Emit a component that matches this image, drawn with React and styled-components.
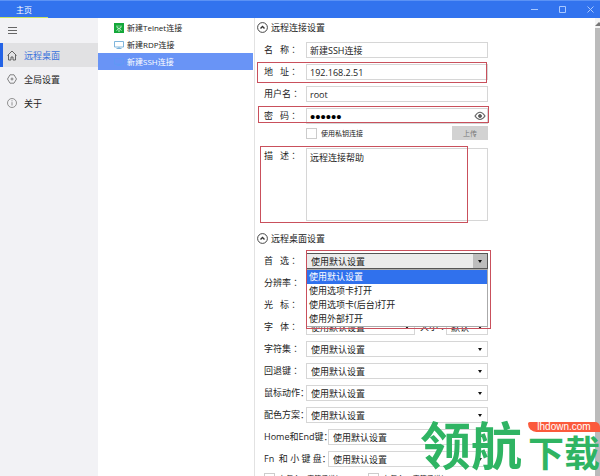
import React from "react";
import styled, { createGlobalStyle } from "styled-components";

const GlobalStyle = createGlobalStyle`
  * {
    box-sizing: border-box;
  }

  body {
    margin: 0;
    overflow: hidden;
  }

  body,
  button,
  input,
  select,
  textarea {
    font-family: "Open Sans", "Noto Sans CJK SC", sans-serif;
    font-size: 9px;
    color: #222;
  }
`;

const Window = styled.div`
  position: relative;
  height: 100vh;
  display: flex;
  flex-direction: column;
  overflow: hidden;
  background: #fff;
`;

const TitleBar = styled.header`
  flex: none;
  height: 18px;
  display: flex;
  justify-content: space-between;
  background: #3273ee;
  border-top: 1px solid #5b92f5;
`;

const HomeTab = styled.button`
  width: 48px;
  padding: 0;
  border: 0;
  border-bottom: 1px solid #c9e265;
  background: none;
  color: #fff;
  font-size: 8px;
`;

const WindowButtons = styled.div`
  display: flex;
  gap: 8px;
`;

const WindowButton = styled.button`
  width: 20px;
  padding: 0;
  border: 0;
  background: none;

  svg {
    display: block;
    margin: 0 auto;
  }
`;

const Body = styled.div`
  flex: 1;
  min-height: 0;
  display: flex;
`;

const Sidebar = styled.nav`
  flex: none;
  width: 98px;
  display: flex;
  flex-direction: column;
  background: #f2f2f5;
`;

const MenuButton = styled.button`
  height: 25px;
  padding: 0 8px;
  border: 0;
  background: none;
  text-align: left;

  svg {
    display: block;
  }
`;

const NavLink = styled.a`
  height: 24px;
  display: flex;
  align-items: center;
  gap: 7px;
  padding-left: 4px;
  border-left: 3px solid ${(props) => (props.$active ? "#2463e6" : "transparent")};
  background: ${(props) => (props.$active ? "#e1e1e3" : "none")};
  color: ${(props) => (props.$active ? "#3a72dc" : "#222")};
  text-decoration: none;
`;

const Connections = styled.div`
  flex: none;
  width: 157px;
  padding: 1px 1px 0 0;
  border-right: 1px solid #e2e2e2;
`;

const Connection = styled.a`
  height: 17px;
  display: flex;
  align-items: center;
  gap: 3px;
  padding-left: 16px;
  background: ${(props) => (props.$active ? "#6994f6" : "none")};
  color: ${(props) => (props.$active ? "#fff" : "#222")};
  font-size: 8px;
  text-decoration: none;
`;

const Settings = styled.main`
  flex: 1;
  min-width: 0;
  overflow: hidden;
  padding: 0 107px 0 2px;
`;

const SectionTitle = styled.button`
  height: 18px;
  display: flex;
  align-items: center;
  gap: 3px;
  padding: 0;
  border: 0;
  background: none;
`;

const Fields = styled.div`
  display: flex;
  flex-direction: column;
  gap: 6px;
  padding: 6px 0 8px 7px;
`;

const Row = styled.div`
  position: relative;
  display: flex;
  align-items: ${(props) => (props.$top ? "flex-start" : "center")};
`;

const LabelText = styled.label`
  flex: none;
  width: ${(props) => (props.$wide ? "64px" : "42px")};
  line-height: 16px;
  white-space: pre;
`;

/* the TC face centres the full-width colon in its cell */
const Colon = styled.span`
  font-family: "Noto Sans CJK TC", sans-serif;
  line-height: 1;
`;

const TextInput = styled.input`
  flex: 1;
  min-width: 0;
  height: 16px;
  padding: 0 3px;
  border: 1px solid #d6d6d6;
  background: #fff;
  outline: none;
`;

const PasswordInput = styled(TextInput)`
  color: #000;
  font-family: "Liberation Sans", sans-serif;
  font-size: 15px;
`;

const TextArea = styled.textarea`
  flex: 1;
  height: 73px;
  padding: 2px 3px;
  border: 1px solid #d6d6d6;
  outline: none;
  resize: none;
`;

/* red marker drawn round the fields the guide points at */
const Marker = styled.div`
  position: absolute;
  top: ${(props) => props.$top}px;
  right: ${(props) => props.$right}px;
  bottom: ${(props) => props.$bottom}px;
  left: ${(props) => props.$left}px;
  border: 1px solid #c9505c;
  pointer-events: none;
  z-index: 3;
`;

const RevealButton = styled.button`
  position: absolute;
  right: 2px;
  top: 3px;
  padding: 0;
  border: 0;
  background: none;

  svg {
    display: block;
  }
`;

const KeyRow = styled.div`
  display: flex;
  justify-content: space-between;
  align-items: center;
  padding-left: 42px;
  margin: -4px 0 2px;
`;

const Check = styled.label`
  display: flex;
  align-items: center;
  gap: 4px;
  font-size: 7px;
  line-height: 11px;
  white-space: nowrap;

  input {
    appearance: none;
    width: 11px;
    height: 11px;
    margin: 0;
    border: 1px solid #ccc;
    background: #fff;
  }
`;

const UploadButton = styled.button`
  width: 36px;
  height: 14px;
  padding: 0;
  border: 0;
  background: #d2d2d2;
  color: #777;
  font-size: 7px;
`;

const SelectBox = styled.div`
  position: relative;
  flex: ${(props) => (props.$width ? "none" : "1")};
  width: ${(props) => (props.$width ? props.$width + "px" : "auto")};
  height: 16px;
  display: flex;

  select {
    appearance: none;
    width: 100%;
    padding: 0 4px;
    border: 1px solid ${(props) => (props.$open ? "#555" : "#d6d6d6")};
    border-radius: 0;
    background: ${(props) => (props.$open ? "#ebebeb" : "#fff")};
    outline: none;
  }
`;

const Arrow = styled.span`
  position: absolute;
  top: 1px;
  right: 1px;
  bottom: 1px;
  width: 14px;
  display: flex;
  align-items: center;
  justify-content: center;
  background: ${(props) => (props.$open ? "#bdbdbd" : "none")};
  pointer-events: none;
`;

const Options = styled.ul`
  position: absolute;
  top: 16px;
  left: 0;
  right: 0;
  z-index: 2;
  margin: 0;
  padding: 0;
  border: 1px solid #aaa;
  background: #fff;
  list-style: none;
`;

const Option = styled.li`
  height: 14px;
  padding-left: 2px;
  line-height: 14px;
  background: ${(props) => (props.$selected ? "#3071ed" : "#fff")};
  color: ${(props) => (props.$selected ? "#fff" : "#222")};
`;

const SizeLabel = styled.label`
  flex: none;
  width: 31px;
  padding-left: 5px;
  line-height: 16px;
  white-space: nowrap;
`;

const CheckRow = styled.div`
  display: flex;
  gap: 17px;
`;

const ScrollBar = styled.div`
  flex: none;
  width: 5px;
  display: flex;
  flex-direction: column;
  background: #f4f4f4;
`;

const ScrollUp = styled.button`
  height: 10px;
  padding: 0;
  border: 0;
  background: none;

  svg {
    display: block;
  }
`;

const ScrollThumb = styled.div`
  flex: 1;
  background: #bbb;
`;

const Watermark = styled.div`
  position: absolute;
  right: 0;
  bottom: 6px;
  z-index: 4;
  display: flex;
  align-items: flex-end;
  gap: 6px;
  color: #2fb463;
  font-family: "Noto Sans CJK SC", sans-serif;
  font-weight: 700;
  white-space: nowrap;
`;

const BigName = styled.span`
  font-size: 51px;
  line-height: 54px;
`;

const SmallName = styled.span`
  display: block;
  font-size: 36px;
  line-height: 38px;
`;

const SiteTag = styled.span`
  display: block;
  height: 10px;
  border-radius: 2px 6px 0 10px;
  background: #fb5a3c;
  color: #fff;
  font-family: "Liberation Sans", sans-serif;
  font-size: 10px;
  font-weight: 400;
  line-height: 10px;
  text-align: center;
`;

const HomeIcon = () => (
  <svg width="10" height="11" viewBox="0 0 10 11" fill="none" stroke="#444">
    <path
      d="M.5 5.500 5 1l4.500 4.500M1.500 5v5h2.500V7h2v3h2.500V5"
      strokeWidth=".8"
    />
  </svg>
);

const SettingsIcon = () => (
  <svg width="10" height="10" viewBox="0 0 10 10" fill="none" stroke="#666">
    <path d="M3 .8h4L9.500 5 7 9.200H3L.5 5z" strokeWidth=".8" />
    <circle cx="5" cy="5" r="1" strokeWidth=".8" />
  </svg>
);

const AboutIcon = () => (
  <svg width="10" height="10" viewBox="0 0 10 10" fill="none" stroke="#777">
    <circle cx="5" cy="5" r="4.500" strokeWidth=".8" />
    <path d="M5 4.200v3.300M5 2.300v1" strokeWidth=".8" />
  </svg>
);

const TelnetIcon = () => (
  <svg width="10" height="10" viewBox="0 0 10 10">
    <path fill="#14a83a" d="M0 0h10v10H0z" />
    <path
      fill="none"
      stroke="#d7f5dc"
      strokeWidth=".9"
      d="M3 2.500v2l2 1 2-1v-2M2.500 7.500 5 5.500l2.500 2M4 8h2M4.500 3h1"
    />
  </svg>
);

const ScreenIcon = ({ color }) => (
  <svg width="10" height="10" viewBox="0 0 10 10" fill="none" stroke={color}>
    <path d="M.5 1.500h9v5.500h-9zM5 7v2M2.500 8.500h5" strokeWidth=".9" />
  </svg>
);

const CollapseIcon = () => (
  <svg width="11" height="11" viewBox="0 0 11 11" fill="none" stroke="#333">
    <circle cx="5.500" cy="5.500" r="4.900" strokeWidth=".9" />
    <path d="M3.500 6.500l2-2 2 2" strokeWidth="1.400" />
  </svg>
);

const EyeIcon = () => (
  <svg width="12" height="10" viewBox="0 0 12 10" fill="none" stroke="#666">
    <path d="M1 5q5-7.500 10 0Q6 12 1 5z" strokeWidth="1.200" />
    <circle cx="6" cy="5" r="1.500" fill="#555" />
  </svg>
);

// long labels take the narrower looking colon of the body font
const Label = ({ text, long, ...rest }) => (
  <LabelText {...rest}>
    {text}
    {long ? "：" : <Colon>：</Colon>}
  </LabelText>
);

const DefaultSelect = ({ id, value = "使用默认设置", width, open, children }) => (
  <SelectBox $width={width} $open={open}>
    <select id={id} defaultValue={value}>
      <option>{value}</option>
    </select>
    <Arrow $open={open}>
      <svg width="4" height="3" viewBox="0 0 4 3">
        <path d="M0 0h4L2 3z" fill="#111" />
      </svg>
    </Arrow>
    {children}
  </SelectBox>
);

const options = [
  "使用默认设置",
  "使用选项卡打开",
  "使用选项卡(后台)打开",
  "使用外部打开",
];

const selects = [
  { id: "charset", label: "字符集" },
  { id: "backspace", label: "回退键" },
  { id: "mouse", label: "鼠标动作", long: true },
  { id: "scheme", label: "配色方案", long: true },
  { id: "homeEnd", label: "Home和End键", long: true, wide: true },
  { id: "keypad", label: "Fn  和 小 键 盘", long: true, wide: true },
];

const App = () => {
  return (
    <Window>
      <GlobalStyle />
      <TitleBar>
        <HomeTab>主页</HomeTab>
        <WindowButtons>
          <WindowButton aria-label="Minimize">
            <svg width="7" height="7" stroke="#a9c8ff">
              <path d="M0 3.500h7" />
            </svg>
          </WindowButton>
          <WindowButton aria-label="Maximize">
            <svg width="7" height="7" stroke="#a9c8ff" fill="none">
              <path d="M.5.5h6v6h-6z" />
            </svg>
          </WindowButton>
          <WindowButton aria-label="Close">
            <svg width="7" height="7" stroke="#a9c8ff">
              <path d="M.5.5l6 6M6.500.5l-6 6" />
            </svg>
          </WindowButton>
        </WindowButtons>
      </TitleBar>

      <Body>
        <Sidebar>
          <MenuButton aria-label="Menu">
            <svg width="9" height="7" stroke="#666">
              <path d="M0 .5h9M0 3.500h9M0 6.500h9" />
            </svg>
          </MenuButton>
          <NavLink href="#desktop" $active>
            <HomeIcon />
            远程桌面
          </NavLink>
          <NavLink href="#global">
            <SettingsIcon />
            全局设置
          </NavLink>
          <NavLink href="#about">
            <AboutIcon />
            关于
          </NavLink>
        </Sidebar>

        <Connections>
          <Connection href="#telnet">
            <TelnetIcon />
            新建Telnet连接
          </Connection>
          <Connection href="#rdp">
            <ScreenIcon color="#72aed8" />
            新建RDP连接
          </Connection>
          <Connection href="#ssh" $active>
            <ScreenIcon color="#5f9af5" />
            新建SSH连接
          </Connection>
        </Connections>

        <Settings>
          <SectionTitle>
            <CollapseIcon />
            远程连接设置
          </SectionTitle>
          <Fields>
            <Row>
              <Label htmlFor="name" text="名   称" />
              <TextInput id="name" defaultValue="新建SSH连接" />
            </Row>
            <Row>
              <Label htmlFor="address" text="地   址" />
              <TextInput id="address" defaultValue="192.168.2.51" />
              <Marker $top={-2} $right={1} $bottom={-3} $left={-7} />
            </Row>
            <Row>
              <Label htmlFor="user" text="用户名" />
              <TextInput id="user" defaultValue="root" />
            </Row>
            <Row>
              <Label htmlFor="password" text="密   码" />
              <PasswordInput
                id="password"
                type="password"
                defaultValue="secret"
              />
              <RevealButton aria-label="Show password">
                <EyeIcon />
              </RevealButton>
              <Marker $top={-2} $right={-1} $bottom={1} $left={-6} />
            </Row>
            <KeyRow>
              <Check>
                <input type="checkbox" />
                使用私钥连接
              </Check>
              <UploadButton>上传</UploadButton>
            </KeyRow>
            <Row $top>
              <Label htmlFor="description" text="描   述" />
              <TextArea id="description" defaultValue="远程连接帮助" />
              <Marker $top={-2} $right={20} $bottom={-2} $left={-4} />
            </Row>
          </Fields>

          <SectionTitle>
            <CollapseIcon />
            远程桌面设置
          </SectionTitle>
          <Fields>
            <Row>
              <Label htmlFor="prefer" text="首   选" />
              <DefaultSelect id="prefer" open>
                <Options role="listbox">
                  {options.map((option, i) => (
                    <Option
                      key={option}
                      role="option"
                      aria-selected={i === 0}
                      $selected={i === 0}
                    >
                      {option}
                    </Option>
                  ))}
                </Options>
                <Marker $top={-3} $right={-3} $bottom={-60} $left={0} />
              </DefaultSelect>
            </Row>
            <Row>
              <Label htmlFor="resolution" text="分辨率" />
              <DefaultSelect id="resolution" />
            </Row>
            <Row>
              <Label htmlFor="cursor" text="光   标" />
              <DefaultSelect id="cursor" />
            </Row>
            <Row>
              <Label htmlFor="font" text="字   体" />
              <DefaultSelect id="font" />
              <SizeLabel htmlFor="size">
                大小<Colon>：</Colon>
              </SizeLabel>
              <DefaultSelect id="size" value="默认" width={42} />
            </Row>
            {selects.map((item) => (
              <Row key={item.id}>
                <Label
                  htmlFor={item.id}
                  text={item.label}
                  long={item.long}
                  $wide={item.wide}
                />
                <DefaultSelect id={item.id} />
              </Row>
            ))}
            <CheckRow>
              <Check>
                <input type="checkbox" />
                在每个LF字符后增加CR
              </Check>
              <Check>
                <input type="checkbox" />
                在每个CR字符后增加LF
              </Check>
            </CheckRow>
          </Fields>
        </Settings>

        <ScrollBar>
          <ScrollUp aria-label="Scroll up">
            <svg width="5" height="5">
              <path d="M0 5l4-4 4 4z" fill="#777" />
            </svg>
          </ScrollUp>
          <ScrollThumb />
        </ScrollBar>
      </Body>

      <Watermark>
        <BigName>领航</BigName>
        <div>
          <SiteTag>lhdown.com</SiteTag>
          <SmallName>下载</SmallName>
        </div>
      </Watermark>
    </Window>
  );
};

export default App;
